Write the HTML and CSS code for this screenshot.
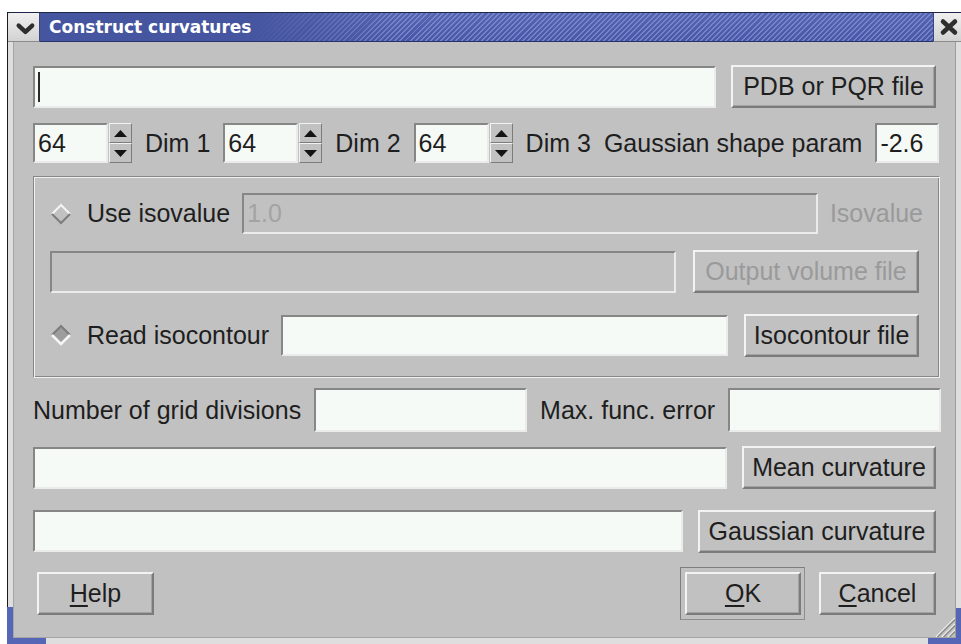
FILE: index.html
```html
<!DOCTYPE html>
<html lang="en">
<head>
<meta charset="utf-8">
<title>Construct curvatures</title>
<link rel="stylesheet" href="styles.css">
</head>
<body>
<div class="window">
  <div class="titlebar">
    <div class="tb-menu">
      <svg width="32" height="28" viewBox="0 0 32 28"><polyline points="11,12.5 18,19 25,12.5" fill="none" stroke="#2e2e2e" stroke-width="4.5" stroke-linecap="round" stroke-linejoin="round"/></svg>
    </div>
    <div class="tb-caption">Construct curvatures</div>
    <div class="tb-close">
      <svg width="27" height="28" viewBox="0 0 27 28"><path d="M9 8.5 L21 19.5 M21 8.5 L9 19.5" fill="none" stroke="#2e2e2e" stroke-width="4.5" stroke-linecap="round"/></svg>
    </div>
  </div>
  <div class="frame">
    <div class="content">
      <div class="row row-file">
        <div class="field grow"><span class="caret"></span></div>
        <button class="btn slot w-pdb">PDB or PQR file</button>
      </div>

      <div class="row row-dims">
        <div class="spin">
          <div class="field spin-edit">64</div>
          <div class="spin-btns">
            <span class="spin-btn"><svg width="13" height="7" viewBox="0 0 13 7"><polygon points="0,7 6.5,0 13,7"/></svg></span>
            <span class="spin-btn"><svg width="13" height="7" viewBox="0 0 13 7"><polygon points="0,0 13,0 6.5,7"/></svg></span>
          </div>
        </div>
        <span class="label">Dim 1</span>
        <div class="spin">
          <div class="field spin-edit">64</div>
          <div class="spin-btns">
            <span class="spin-btn"><svg width="13" height="7" viewBox="0 0 13 7"><polygon points="0,7 6.5,0 13,7"/></svg></span>
            <span class="spin-btn"><svg width="13" height="7" viewBox="0 0 13 7"><polygon points="0,0 13,0 6.5,7"/></svg></span>
          </div>
        </div>
        <span class="label">Dim 2</span>
        <div class="spin">
          <div class="field spin-edit">64</div>
          <div class="spin-btns">
            <span class="spin-btn"><svg width="13" height="7" viewBox="0 0 13 7"><polygon points="0,7 6.5,0 13,7"/></svg></span>
            <span class="spin-btn"><svg width="13" height="7" viewBox="0 0 13 7"><polygon points="0,0 13,0 6.5,7"/></svg></span>
          </div>
        </div>
        <span class="label">Dim 3</span>
        <span class="label">Gaussian shape param</span>
        <div class="field param">-2.6</div>
      </div>

      <div class="group">
        <div class="g-row g-iso">
          <svg class="radio" width="22" height="22" viewBox="0 0 22 22">
            <polygon points="11,2 20,11 11,20 2,11" fill="#c1c1c1"/>
            <polyline points="2,11 11,2 20,11" fill="none" stroke="#f4f4f4" stroke-width="2"/>
            <polyline points="2,11 11,20 20,11" fill="none" stroke="#7d7d7d" stroke-width="2"/>
          </svg>
          <span class="label">Use isovalue</span>
          <div class="field grow disabled h41">1.0</div>
          <span class="label muted">Isovalue</span>
        </div>
        <div class="g-row g-out">
          <div class="field grow disabled h42"></div>
          <button class="btn slot w-out" disabled>Output volume file</button>
        </div>
        <div class="g-row g-contour">
          <svg class="radio" width="22" height="22" viewBox="0 0 22 22">
            <polygon points="11,2 20,11 11,20 2,11" fill="#9d9d9d"/>
            <polyline points="2,11 11,2 20,11" fill="none" stroke="#7d7d7d" stroke-width="2"/>
            <polyline points="2,11 11,20 20,11" fill="none" stroke="#f6f6f6" stroke-width="2.5"/>
          </svg>
          <span class="label">Read isocontour</span>
          <div class="field grow h41"></div>
          <button class="btn slot w-iso">Isocontour file</button>
        </div>
      </div>

      <div class="row row-grid">
        <span class="label">Number of grid divisions</span>
        <div class="field grow h44"></div>
        <span class="label">Max. func. error</span>
        <div class="field grow h44"></div>
      </div>

      <div class="row row-mean">
        <div class="field grow"></div>
        <button class="btn slot w-mean">Mean curvature</button>
      </div>

      <div class="row row-gauss">
        <div class="field grow"></div>
        <button class="btn slot w-gauss">Gaussian curvature</button>
      </div>

      <div class="row row-actions">
        <button class="btn slot w-dlg"><u>H</u>elp</button>
        <span class="spacer"></span>
        <div class="default-frame"><button class="btn w-ok"><u>O</u>K</button></div>
        <button class="btn slot w-dlg"><u>C</u>ancel</button>
      </div>

      <svg class="size-grip" width="22" height="22" viewBox="0 0 22 22">
        <g stroke-width="1.5">
          <line x1="3" y1="22" x2="22" y2="3" stroke="#f2f2f2"/>
          <line x1="4.5" y1="22" x2="22" y2="4.5" stroke="#8a8a8a"/>
          <line x1="9" y1="22" x2="22" y2="9" stroke="#f2f2f2"/>
          <line x1="10.5" y1="22" x2="22" y2="10.5" stroke="#8a8a8a"/>
          <line x1="15" y1="22" x2="22" y2="15" stroke="#f2f2f2"/>
          <line x1="16.5" y1="22" x2="22" y2="16.5" stroke="#8a8a8a"/>
        </g>
      </svg>
    </div>
  </div>
</div>
</body>
</html>
```

FILE: styles.css
```css
* {
  box-sizing: border-box;
}

html,
body {
  margin: 0;
  padding: 0;
  background: #ffffff;
}

body {
  font-family: "Liberation Sans", Arial, sans-serif;
  font-size: 25px;
  color: #1e1e1e;
}

/* ---------- window frame ---------- */
.window {
  position: relative;
  margin: 12px 0 0 7px;
  width: 954px;
  height: 632px;
  display: flex;
  flex-direction: column;
  background: #dedede;
  border-left: 1px solid #1c1c1c;
}

/* blue resize corners on the frame */
.window::before,
.window::after {
  content: "";
  position: absolute;
  bottom: 0;
  border-color: #5666b6;
  border-style: solid;
}

.window::before {
  left: -1px;
  width: 33px;
  height: 31px;
  border-width: 0 0 6px 6px;
}

.window::after {
  right: 0;
  width: 28px;
  height: 30px;
  border-width: 0 5px 6px 0;
}

/* ---------- title bar ---------- */
.titlebar {
  height: 30px;
  display: flex;
  border-top: 1px solid #1f2748;
}

.tb-menu,
.tb-close {
  display: flex;
  align-items: center;
  justify-content: center;
  background: linear-gradient(to bottom, #f0f0f0, #d2d2d2);
  border-bottom: 1px solid #8c8c8c;
}

.tb-menu {
  width: 32px;
  border-top-left-radius: 4px;
  border-right: 1px solid #38457e;
}

.tb-close {
  width: 28px;
  border-left: 1px solid #38457e;
}

.tb-caption {
  flex: 1;
  display: flex;
  align-items: center;
  padding-left: 9px;
  font-family: "DejaVu Sans", "Liberation Sans", sans-serif;
  font-weight: bold;
  font-size: 17px;
  color: #ffffff;
  border-bottom: 1px solid #27336a;
  background:
    linear-gradient(to right, #45559f 0, #45559f 210px, rgba(69, 85, 159, 0) 360px),
    repeating-linear-gradient(135deg, rgba(150, 162, 225, 0.55) 0 1.4px, rgba(0, 0, 0, 0) 1.4px 3.6px),
    linear-gradient(to bottom, #5565b2, #4757a6);
}

/* ---------- client area ---------- */
.frame {
  flex: 1;
  display: flex;
  flex-direction: column;
  padding: 0 5px 6px 5px;
}

.content {
  position: relative;
  flex: 1;
  display: flex;
  flex-direction: column;
  background: #c1c1c1;
  border-left: 1px solid #a5a5a5;
  border-right: 1px solid #9c9c9c;
  border-bottom: 1px solid #a5a5a5;
  padding: 23px 15px 0 19px;
}

.row {
  display: flex;
  align-items: center;
  gap: 11px;
}

.row-file { height: 43px; }
.row-dims { height: 40px; margin-top: 15px; gap: 13px; }
.row-grid { height: 44px; margin-top: 10px; gap: 13px; margin-right: -1px; }
.row-mean { height: 43px; margin-top: 14px; }
.row-gauss { height: 44px; margin-top: 20px; }
.row-actions { height: 53px; margin-top: 14px; gap: 10px; }

.label {
  white-space: nowrap;
  line-height: 1;
}

.muted {
  color: #9a9a9a;
}

.spacer {
  flex: 1;
}

/* ---------- line edits ---------- */
.field {
  height: 42px;
  display: flex;
  align-items: center;
  padding-left: 3px;
  background: #f6faf6;
  border: 2px solid;
  border-color: #868686 #ebebeb #ebebeb #868686;
  line-height: 1;
  white-space: nowrap;
}

.grow {
  flex: 1;
  min-width: 0;
}

.h41 { height: 41px; }
.h42 { height: 42px; }
.h44 { height: 44px; }

.field.disabled {
  background: #c1c1c1;
  color: #a3a3a3;
}

.caret {
  width: 2px;
  height: 30px;
  background: #2a2a2a;
}

.param {
  width: 64px;
  height: 40px;
}

/* ---------- spin boxes ---------- */
.spin {
  display: flex;
  height: 40px;
}

.spin-edit {
  width: 75px;
  height: 40px;
}

.spin-btns {
  width: 23px;
  margin-left: 1px;
  display: flex;
  flex-direction: column;
}

.spin-btn {
  flex: 1;
  display: flex;
  align-items: center;
  justify-content: center;
  background: #c1c1c1;
  border: 1px solid;
  border-color: #f2f2f2 #7c7c7c #7c7c7c #f2f2f2;
}

.spin-btn svg {
  fill: #141414;
}

/* ---------- push buttons ---------- */
.btn {
  appearance: none;
  margin: 0;
  padding: 0;
  height: 43px;
  display: flex;
  align-items: center;
  justify-content: center;
  font: inherit;
  line-height: 1;
  color: #1e1e1e;
  background: #c1c1c1;
  border: 2px solid;
  border-color: #f3f3f3 #7b7b7b #7b7b7b #f3f3f3;
  box-shadow: inset -1px -1px 0 #a3a3a3;
  white-space: nowrap;
}

.btn:disabled {
  color: #9a9a9a;
}

.btn u {
  text-decoration-thickness: 2px;
  text-underline-offset: 3px;
}

.slot {
  margin: 0 4px;
}

.w-pdb { width: 205px; }
.w-out { width: 226px; }
.w-iso { width: 175px; }
.w-mean { width: 194px; }
.w-gauss { width: 238px; }
.w-dlg { width: 117px; }
.w-ok { width: 116px; }

.default-frame {
  width: 125px;
  height: 53px;
  padding: 4px 0 0 4px;
  border: 1px solid;
  border-color: #7e7e7e #8e8e8e #8e8e8e #7e7e7e;
}

/* ---------- group box ---------- */
.group {
  height: 202px;
  margin-top: 13px;
  padding: 16px 16px 0 16px;
  border: 1px solid;
  border-color: #878787 #f0f0f0 #f0f0f0 #878787;
  box-shadow: inset 1px 1px 0 #f0f0f0, inset -1px -1px 0 #878787;
}

.g-row {
  display: flex;
  align-items: center;
  gap: 12px;
}

.g-iso { height: 41px; }
.g-out { height: 43px; margin-top: 16px; gap: 13px; }
.g-contour { height: 44px; margin-top: 20px; }

.radio {
  flex: none;
  margin-right: 3px;
}

/* ---------- size grip ---------- */
.size-grip {
  position: absolute;
  right: 0;
  bottom: 0;
}
```
